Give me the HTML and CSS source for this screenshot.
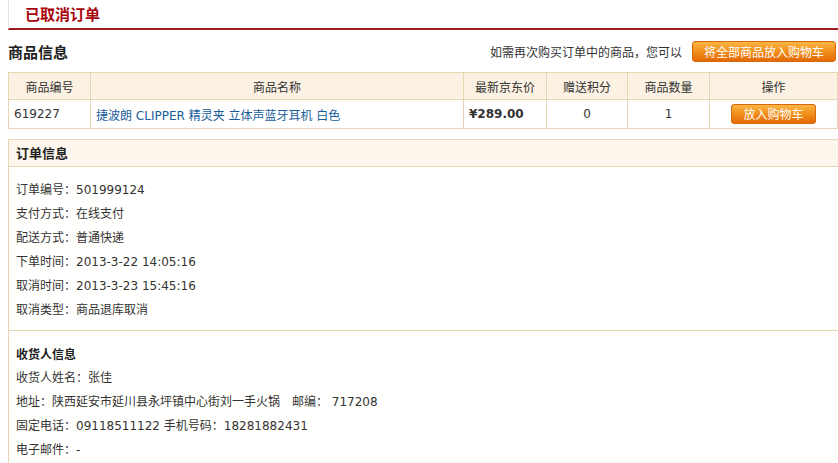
FILE: index.html
```html
<!DOCTYPE html>
<html lang="zh">
<head>
<meta charset="utf-8">
<title>已取消订单</title>
<link rel="stylesheet" href="styles.css">
</head>
<body>
<div class="page">
  <div class="title-bar"><h1 class="title">已取消订单</h1></div>

  <div class="goods-head">
    <h2 class="goods-title">商品信息</h2>
    <div class="rebuy">
      <span class="rebuy-text">如需再次购买订单中的商品，您可以</span>
      <a class="btn btn-all">将全部商品放入购物车</a>
    </div>
  </div>

  <table class="goods">
    <thead>
      <tr>
        <th class="c-id">商品编号</th>
        <th class="c-name">商品名称</th>
        <th class="c-price">最新京东价</th>
        <th class="c-points">赠送积分</th>
        <th class="c-qty">商品数量</th>
        <th class="c-op">操作</th>
      </tr>
    </thead>
    <tbody>
      <tr>
        <td class="left">619227</td>
        <td class="left"><a class="link">捷波朗 CLIPPER 精灵夹 立体声蓝牙耳机 白色</a></td>
        <td class="left price">¥289.00</td>
        <td>0</td>
        <td>1</td>
        <td><a class="btn btn-one">放入购物车</a></td>
      </tr>
    </tbody>
  </table>

  <div class="box">
    <div class="box-head">订单信息</div>
    <div class="box-sec">
      <p>订单编号：501999124</p>
      <p>支付方式：在线支付</p>
      <p>配送方式：普通快递</p>
      <p>下单时间：2013-3-22 14:05:16</p>
      <p>取消时间：2013-3-23 15:45:16</p>
      <p>取消类型：商品退库取消</p>
    </div>
    <div class="box-sec sec2">
      <p class="sec-title">收货人信息</p>
      <p>收货人姓名：张佳</p>
      <p>地址：陕西延安市延川县永坪镇中心街刘一手火锅<span class="gap"></span>邮编： 717208</p>
      <p>固定电话：09118511122 手机号码：18281882431</p>
      <p>电子邮件：-</p>
    </div>
  </div>
</div>
</body>
</html>
```

FILE: styles.css
```css
html, body {
  margin: 0;
  padding: 0;
  background: #fff;
}
body {
  font-family: "DejaVu Sans", "Noto Sans CJK SC", sans-serif;
  font-size: 12px;
  color: #333;
}
.page {
  padding-left: 8px;
}
.title-bar {
  height: 28px;
  border-left: 1px solid #e2e2e2;
  border-bottom: 2px solid #9b1c1c;
  display: flex;
  align-items: center;
}
.title {
  margin: 0 0 0 16px;
  font-family: "Noto Sans CJK SC", sans-serif;
  font-size: 15px;
  font-weight: bold;
  color: #a8050d;
  line-height: 20px;
}
.goods-head {
  display: flex;
  justify-content: space-between;
  align-items: center;
  height: 42px;
}
.goods-title {
  margin: 0;
  font-family: "Noto Sans CJK SC", sans-serif;
  font-size: 15px;
  font-weight: bold;
  color: #222;
}
.rebuy {
  display: flex;
  align-items: center;
  gap: 10px;
  padding-right: 2px;
}
.rebuy-text {
  font-family: "Noto Sans CJK SC", sans-serif;
  color: #333;
}
.btn {
  display: inline-block;
  font-family: "Noto Sans CJK SC", sans-serif;
  font-size: 12px;
  color: #fff;
  text-align: center;
  background: linear-gradient(#fbb544, #f08a17 55%, #e36a06);
  border: 1px solid #d8680c;
  border-radius: 3px;
  box-sizing: border-box;
}
.btn-all {
  width: 144px;
  height: 21px;
  line-height: 19px;
}
.btn-one {
  width: 85px;
  height: 20px;
  line-height: 18px;
}
.goods {
  width: 830px;
  border-collapse: collapse;
  font-size: 12px;
}
.goods th, .goods td {
  border: 1px solid #e6d6b3;
  text-align: center;
  padding: 0 5px;
}
.goods th {
  height: 26px;
  background: #fcf2e3;
  font-family: "Noto Sans CJK SC", sans-serif;
  font-weight: normal;
  color: #333;
}
.goods td {
  height: 28px;
}
.goods td.left {
  text-align: left;
}
.c-id { width: 71px; }
.c-name { width: 362px; }
.c-price { width: 72px; }
.c-points { width: 70px; }
.c-qty { width: 71px; }
.link {
  color: #1a5d9a;
}
.price {
  font-weight: bold;
}
.box {
  margin-top: 10px;
  width: 830px;
  border: 1px solid #e6d6b3;
  border-bottom: none;
  background: #fffffd;
}
.box-head {
  height: 26px;
  line-height: 26px;
  padding-left: 7px;
  background: #fcf6ec;
  border-bottom: 1px solid #e6d6b3;
  font-family: "Noto Sans CJK SC", sans-serif;
  font-size: 13px;
  font-weight: bold;
  color: #222;
}
.box-sec {
  padding: 11px 7px 8px;
}
.box-sec p {
  margin: 0;
  line-height: 24px;
}
.sec2 {
  border-top: 1px solid #e6d6b3;
  padding-top: 11px;
}
.sec-title {
  font-family: "Noto Sans CJK SC", sans-serif;
  font-weight: bold;
  color: #222;
}
.gap {
  display: inline-block;
  width: 12px;
}
```
